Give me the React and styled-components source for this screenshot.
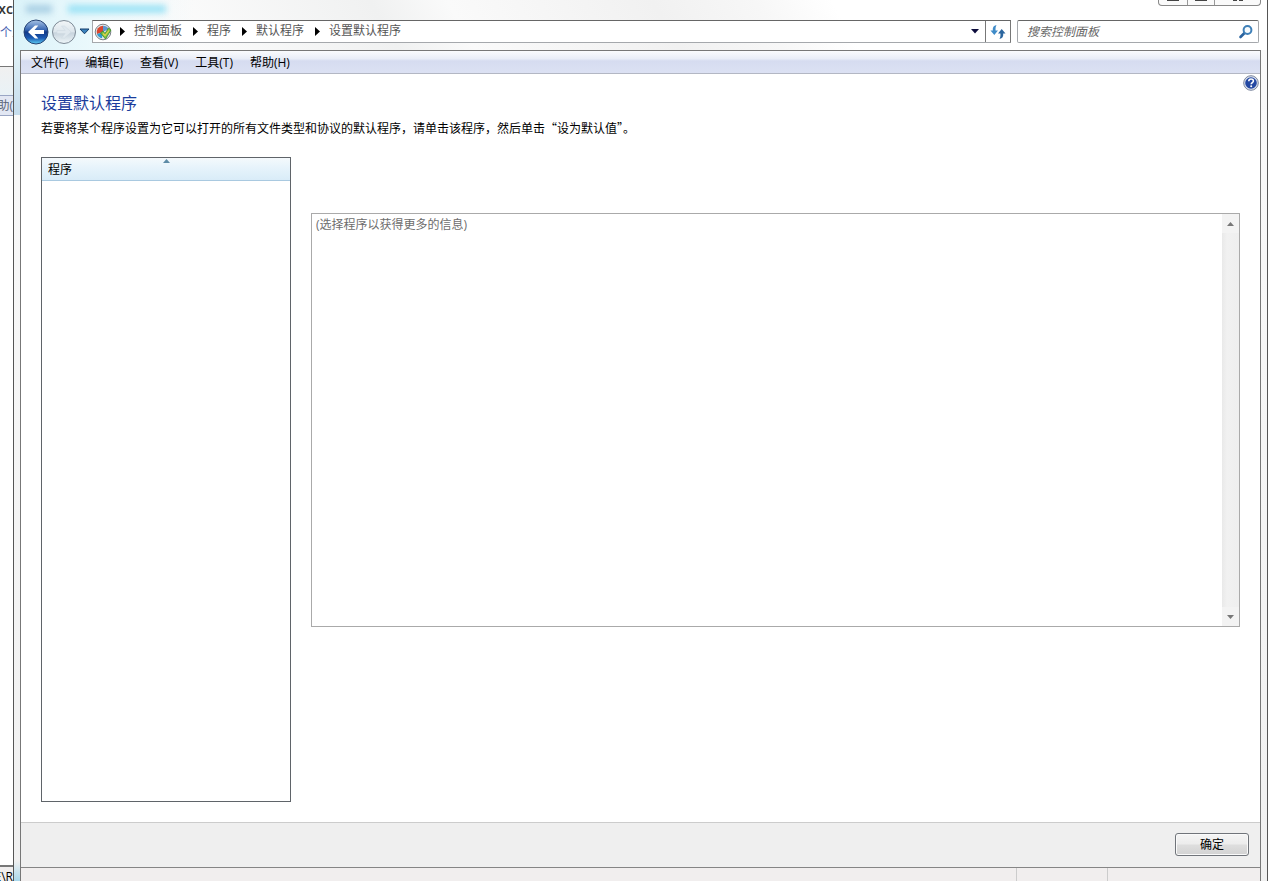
import React from "react";
import styled, { createGlobalStyle } from "styled-components";

const GlobalStyle = createGlobalStyle`
  *, *::before, *::after { box-sizing: border-box; }
  body {
    margin: 0;
    background: #fff;
    color: #000;
    font: 12px/16px "Open Sans", "Noto Sans CJK SC", sans-serif;
    overflow: hidden;
  }
  button, input { font: inherit; color: inherit; }
`;

const Desktop = styled.div`
  display: flex;
  height: 100vh;
  padding-right: 5px;
`;

/* The window lying behind, of which only a strip shows */
const BackWindow = styled.aside`
  display: flex;
  flex-direction: column;
  width: 13px;
  flex: none;
  overflow: hidden;
  white-space: nowrap;
`;
const BackTitle = styled.div`
  display: flex;
  justify-content: flex-end;
  height: 24px;
  font-weight: 600;
  font-size: 14px;
  line-height: 18px;
  color: #333;
`;
const BackLink = styled.a`
  height: 42px;
  line-height: 18px;
  color: #4a62b0;
  text-decoration: none;
`;
const BackBar = styled.div`
  height: 29px;
  border-top: 1px solid #777;
  background: linear-gradient(#f0f0f0, #e9f2f6);
`;
const BackMenu = styled.div`
  display: flex;
  justify-content: flex-end;
  height: 21px;
  border: solid #9aa6c4;
  border-width: 1px 0;
  line-height: 19px;
  color: #5a6478;
  background: #e2e7f3;
`;
const BackBody = styled.div`
  flex: 1;
`;
const BackStatus = styled.div`
  display: flex;
  justify-content: flex-end;
  height: 16px;
  border-top: 2px solid #777;
  line-height: 20px;
  background: #f0eeee;
`;

const Frame = styled.div`
  display: flex;
  flex-direction: column;
  flex: 1;
  min-width: 0;
  padding: 0 6px;
  border: solid #555;
  border-width: 0 1px;
  background:
    linear-gradient(90deg, rgba(190, 234, 245, 0.55), rgba(190, 234, 245, 0) 180px) 0 0 / 100% 50px no-repeat,
    linear-gradient(60deg, #fff 8%, #f0f1f1 30%, #fafafa 36%, #f1f1f1 52%, #f7f7f7 60%, #fff 66%) 0 0 / 100% 50px no-repeat,
    linear-gradient(rgba(168, 216, 236, 0), #a8d8ec) 0 100% / 6px 20px no-repeat,
    linear-gradient(#e2f3f8, #c5dcec) 0 50px / 6px 65px no-repeat,
    linear-gradient(#fafafa, #f0f0f0);
`;

const TitleBar = styled.header`
  display: flex;
  justify-content: space-between;
  height: 20px;
`;
const TitleGhost = styled.div`
  display: flex;
  gap: 16px;
  padding: 5px 6px;
  filter: blur(3px);
`;
const Smudge = styled.span`
  width: ${(p) => p.$width}px;
  height: 8px;
  background: ${(p) => p.$color};
`;
const WindowButtons = styled.div`
  display: flex;
  height: 6px;
  border: 1px solid #888;
  border-top: 0;
  border-radius: 0 0 4px 4px;
  overflow: hidden;
  background: #fafafa;
`;
const WindowButton = styled.button`
  display: flex;
  justify-content: center;
  align-items: flex-start;
  width: ${(p) => p.$width}px;
  padding: 0;
  border: 0;
  border-left: ${(p) => (p.$first ? "0" : "1px solid #999")};
  background: none;
`;

const NavRow = styled.nav`
  display: flex;
  height: 23px;
  margin-bottom: 7px;
`;
const History = styled.div`
  display: flex;
  align-items: center;
  width: 72px;
  padding-left: 1px;
  flex: none;
`;
const IconButton = styled.button`
  display: flex;
  align-items: center;
  justify-content: center;
  flex: none;
  width: ${(p) => p.$width}px;
  height: 100%;
  padding: 0;
  border: 0;
  border-left: ${(p) => (p.$divided ? "1px solid #777" : "0")};
  background: none;
`;
const AddressBar = styled.div`
  display: flex;
  align-items: center;
  flex: 1;
  min-width: 0;
  height: 23px;
  padding-left: 1px;
  border: 1px solid #a5a8ac;
  border-top-color: #666;
  border-right-color: #777;
  background: #fff;
`;
const Crumbs = styled.ol`
  display: flex;
  flex: 1;
  margin: 0 0 0 -3px;
  padding: 0;
  list-style: none;
  white-space: nowrap;
`;
const Crumb = styled.li`
  display: flex;
  align-items: center;
`;
const CrumbLink = styled.a`
  height: 20px;
  line-height: 18px;
  color: #555;
  text-decoration: none;
`;
const SearchBox = styled.label`
  display: flex;
  align-items: center;
  width: 242px;
  height: 23px;
  margin-left: 6px;
  margin-right: 2px;
  padding: 0 4px 0 9px;
  border: 1px solid #a5a8ac;
  border-top-color: #666;
  border-radius: 2px;
  background: #fff;
`;
const SearchInput = styled.input`
  flex: 1;
  min-width: 0;
  height: 21px;
  padding: 0;
  border: 0;
  outline: 0;
  background: none;
  font-style: italic;
  &::placeholder { color: #666; opacity: 1; }
`;

const Client = styled.section`
  display: flex;
  flex-direction: column;
  flex: 1;
  min-height: 0;
  border: 1px solid #777;
  border-bottom: 0;
  background: #fff;
`;
const MenuBar = styled.div`
  display: flex;
  flex: none;
  gap: 17px;
  height: 23px;
  padding-left: 10px;
  border-bottom: 1px solid #b3b7c4;
  background: linear-gradient(#fafbfd, #e9edf7 35%, #d6dcf0 45%, #dce1f3);
`;
const MenuItem = styled.button`
  padding: 0;
  border: 0;
  background: none;
  line-height: 24px;
  white-space: nowrap;
`;

const Content = styled.main`
  position: relative;
  display: flex;
  flex-direction: column;
  flex: 1;
  min-height: 0;
  padding: 16px 20px 20px;
`;
const HelpButton = styled.button`
  position: absolute;
  top: 0;
  right: 0;
  display: flex;
  width: 18px;
  height: 18px;
  padding: 1px;
  border: 0;
  background: none;
`;
const Heading = styled.h1`
  margin: 0 0 6px;
  font: 400 16px/24px "Noto Sans CJK SC", sans-serif;
  color: #1a3c9c;
`;
const Description = styled.p`
  margin: 0 0 21px;
  font-family: "Noto Sans CJK SC", sans-serif;
  line-height: 16px;
`;
const Columns = styled.div`
  display: flex;
  gap: 20px;
  flex: 1;
  min-height: 0;
`;
const ProgramList = styled.section`
  width: 250px;
  flex: none;
  border: 1px solid #5f6469;
`;
const ListHeader = styled.button`
  position: relative;
  display: block;
  width: 100%;
  height: 23px;
  padding: 0 6px;
  border: 0;
  border-bottom: 1px solid #a9c9e0;
  background: linear-gradient(#f4f9fc, #e6f3fb 45%, #d9ecf8);
  line-height: 24px;
  text-align: left;
`;
const SortMark = styled.svg`
  position: absolute;
  top: 1px;
  left: 50%;
  margin-left: -3px;
`;
const Details = styled.section`
  display: flex;
  flex: 1;
  min-width: 0;
  margin: 56px 0 175px;
  border: 1px solid #aaa;
`;
const DetailsText = styled.p`
  flex: 1;
  margin: 0;
  padding: 3px 4px;
  color: #6d6d6d;
`;
const ScrollBar = styled.div`
  display: flex;
  flex-direction: column;
  justify-content: space-between;
  width: 17px;
  background: linear-gradient(90deg, #e9e9e9, #f1f1f1 30%, #efefef);
`;
const ScrollButton = styled.button`
  display: flex;
  align-items: center;
  justify-content: center;
  height: 19px;
  padding: 0;
  border: 0;
  background: #f3f3f3;
`;

const Footer = styled.footer`
  display: flex;
  flex: none;
  align-items: center;
  justify-content: flex-end;
  height: 45px;
  padding: 0 11px 2px 0;
  border-top: 1px solid #ccc;
  background: #efefef;
`;
const OkButton = styled.button`
  width: 74px;
  height: 23px;
  padding: 0;
  border: 1px solid #70747a;
  border-radius: 3px;
  background: linear-gradient(#f5f5f5, #ececec 48%, #dedede 52%, #d2d2d2);
  box-shadow: inset 0 0 0 1px #fafafa;
  line-height: 21px;
`;
const StatusBar = styled.div`
  display: flex;
  justify-content: flex-end;
  flex: none;
  height: 14px;
  border-top: 1px solid #858585;
  background: #f1eeee;
`;
const StatusPane = styled.div`
  width: ${(p) => p.$width}px;
  border-left: 1px solid #ccc;
`;

const BackIcon = () => (
  <svg width="26" height="26" viewBox="0 0 26 26">
    <defs>
      <linearGradient id="ball" x1="0" y1="0" x2="0" y2="1">
        <stop offset="0" stopColor="#a9c4e6" />
        <stop offset="0.4" stopColor="#3a69b4" />
        <stop offset="0.5" stopColor="#123a88" />
        <stop offset="0.75" stopColor="#1b5bb4" />
        <stop offset="1" stopColor="#5fd0f4" />
      </linearGradient>
    </defs>
    <circle cx="13" cy="13" r="12" fill="url(#ball)" stroke="#254273" />
    <path d="M5 13 12 6.5h3.3L11.5 11H21v4h-9.5l3.8 4.5H12z" fill="#fff" />
  </svg>
);

const ForwardIcon = () => (
  <svg width="26" height="26" viewBox="0 0 26 26">
    <defs>
      <linearGradient id="glass" x1="0" y1="0" x2="0" y2="1">
        <stop offset="0" stopColor="#f2f6f8" />
        <stop offset="0.48" stopColor="#dde6ec" />
        <stop offset="0.54" stopColor="#c8d4dd" />
        <stop offset="1" stopColor="#eef6f9" />
      </linearGradient>
    </defs>
    <circle cx="13" cy="13" r="11.5" fill="url(#glass)" stroke="#7d8a96" />
    <path d="M20 13 13.5 7h-3l3.7 4.5H6v3h8.200L10.500 19h3z" fill="#dfe8ee" stroke="#cdd8e0" strokeWidth=".5" />
  </svg>
);

const PanelIcon = () => (
  <svg width="18" height="18" viewBox="0 0 18 18">
    <circle cx="9" cy="9" r="7.800" fill="#e9eaeb" stroke="#7b8288" />
    <path d="M9 9V2.800A6.200 6.200 0 0 0 3 11z" fill="#d9472f" />
    <path d="M9 9V2.800A6.200 6.200 0 0 1 14.500 6z" fill="#5f97d0" />
    <path d="M9 9 3 11a6.200 6.200 0 0 0 5 4.200z" fill="#2f9ad0" />
    <path d="m6.500 10 2.500-2 2 2.500L14.500 5l2.500 2-5.500 9z" fill="#7cc142" stroke="#3c8a2c" strokeWidth=".8" />
    <path d="m9 10.500 2 2 4-5" fill="none" stroke="#e5d44a" strokeWidth="1.200" />
  </svg>
);

const CrumbArrow = () => (
  <svg width="25" height="9" viewBox="0 0 25 9">
    <path d="M11 0v9l5-4.500z" fill="#000" />
  </svg>
);

const RefreshIcon = () => (
  <svg width="16" height="16" viewBox="0 0 16 16">
    <path d="M6.500 1C3.500 1.500 2.500 3.500 2.800 6.500H.5L4.300 11 8 6.500H5.600C5.400 4.500 5.500 3 6.500 1z" fill="#3f8bc8" />
    <path d="M9.500 15c3-.5 4-2.500 3.700-5.500h2.300L11.700 5 8 9.500h2.400c.2 2 .1 3.500-.9 5.500z" fill="#2b669f" />
  </svg>
);

const SearchIcon = () => (
  <svg width="16" height="16" viewBox="0 0 16 16">
    <path d="M6.500 9 2.500 13" stroke="#2a639f" strokeWidth="2.600" strokeLinecap="round" />
    <circle cx="9.500" cy="6" r="3.900" fill="#f7fbfe" stroke="#3f80b8" strokeWidth="2" />
  </svg>
);

const HelpIcon = () => (
  <svg width="16" height="16" viewBox="0 0 16 16">
    <circle cx="8" cy="8" r="7.300" fill="#dde3ef" stroke="#7b859c" />
    <circle cx="8" cy="8" r="5.800" fill="#2448a2" />
    <path d="M5.800 6.200c0-3 4.600-2.900 4.600-.2 0 1.500-2.100 1.600-2.200 3.200" fill="none" stroke="#fff" strokeWidth="1.600" />
    <circle cx="8.200" cy="11.300" r="1" fill="#fff" />
  </svg>
);

const crumbs = ["控制面板", "程序", "默认程序", "设置默认程序"];
const menus = ["文件(F)", "编辑(E)", "查看(V)", "工具(T)", "帮助(H)"];

export default function App() {
  return (
    <>
      <GlobalStyle />
      <Desktop lang="zh-CN">
        <BackWindow>
          <BackTitle>xxc</BackTitle>
          <BackLink href="#">个人</BackLink>
          <BackBar />
          <BackMenu>助(</BackMenu>
          <BackBody />
          <BackStatus>E\R</BackStatus>
        </BackWindow>

        <Frame>
          <TitleBar>
            <TitleGhost aria-hidden="true">
              <Smudge $width={26} $color="#a9cfe4" />
              <Smudge $width={98} $color="#9be2f5" />
            </TitleGhost>
            <WindowButtons>
              <WindowButton $first $width={28} aria-label="最小化">
                <svg width="12" height="2"><path d="M0 0h12v1H0z" fill="#444" /></svg>
              </WindowButton>
              <WindowButton $width={27} aria-label="最大化">
                <svg width="12" height="2"><path d="M0 0h12v1H0z" fill="#444" /></svg>
              </WindowButton>
              <WindowButton $width={46} aria-label="关闭">
                <svg width="12" height="2"><path d="M1 0h4v1H1zM7 0h4v1H7z" fill="#444" /></svg>
              </WindowButton>
            </WindowButtons>
          </TitleBar>

          <NavRow>
            <History>
              <IconButton $width={29} aria-label="后退"><BackIcon /></IconButton>
              <IconButton $width={28} aria-label="前进"><ForwardIcon /></IconButton>
              <IconButton $width={13} aria-label="最近浏览的位置">
                <svg width="11" height="7" viewBox="0 0 11 7">
                  <path d="M1 1h9L5.500 5.800z" fill="#3b83bd" stroke="#173f6c" />
                </svg>
              </IconButton>
            </History>
            <AddressBar>
              <PanelIcon />
              <Crumbs>
                {crumbs.map((name) => (
                  <Crumb key={name}>
                    <CrumbArrow />
                    <CrumbLink href="#">{name}</CrumbLink>
                  </Crumb>
                ))}
              </Crumbs>
              <IconButton $width={20} aria-label="以前的位置">
                <svg width="8" height="5" viewBox="0 0 8 5"><path d="M0 0h8L4 4.500z" fill="#0c0c3c" /></svg>
              </IconButton>
              <IconButton $width={25} $divided aria-label="刷新"><RefreshIcon /></IconButton>
            </AddressBar>
            <SearchBox>
              <SearchInput type="search" placeholder="搜索控制面板" aria-label="搜索控制面板" />
              <SearchIcon />
            </SearchBox>
          </NavRow>

          <Client>
            <MenuBar>
              {menus.map((name) => (
                <MenuItem key={name}>{name}</MenuItem>
              ))}
            </MenuBar>
            <Content>
              <HelpButton aria-label="帮助"><HelpIcon /></HelpButton>
              <Heading>设置默认程序</Heading>
              <Description>
                若要将某个程序设置为它可以打开的所有文件类型和协议的默认程序，请单击该程序，然后单击“设为默认值”。
              </Description>
              <Columns>
                <ProgramList>
                  <ListHeader>
                    程序
                    <SortMark width="7" height="4" viewBox="0 0 7 4">
                      <path d="M3.500 0 7 4H0z" fill="#5d8ba6" />
                    </SortMark>
                  </ListHeader>
                </ProgramList>
                <Details>
                  <DetailsText>(选择程序以获得更多的信息)</DetailsText>
                  <ScrollBar>
                    <ScrollButton aria-label="向上滚动">
                      <svg width="7" height="4" viewBox="0 0 7 4"><path d="M3.500 0 7 4H0z" fill="#777" /></svg>
                    </ScrollButton>
                    <ScrollButton aria-label="向下滚动">
                      <svg width="7" height="4" viewBox="0 0 7 4"><path d="M3.500 4 7 0H0z" fill="#777" /></svg>
                    </ScrollButton>
                  </ScrollBar>
                </Details>
              </Columns>
            </Content>
            <Footer>
              <OkButton>确定</OkButton>
            </Footer>
            <StatusBar>
              <StatusPane $width={91} />
              <StatusPane $width={153} />
            </StatusBar>
          </Client>
        </Frame>
      </Desktop>
    </>
  );
}
